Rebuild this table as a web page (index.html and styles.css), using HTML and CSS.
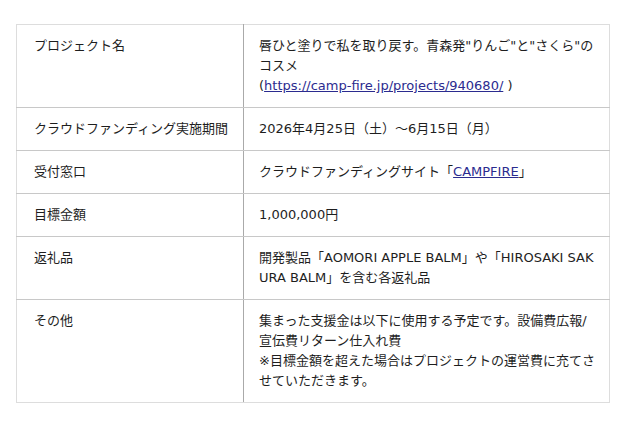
FILE: index.html
```html
<!DOCTYPE html>
<html lang="ja">
<head>
<meta charset="utf-8">
<link rel="stylesheet" href="styles.css">
</head>
<body>
<div class="wrap">
<table class="info">
  <tr>
    <td class="label">プロジェクト名</td>
    <td class="value">唇ひと塗りで私を取り戻す。青森発"りんご"と"さくら"のコスメ<br>(<a href="#">https://camp-fire.jp/projects/940680/</a> )</td>
  </tr>
  <tr>
    <td class="label">クラウドファンディング実施期間</td>
    <td class="value">2026年4月25日（土）～6月15日（月）</td>
  </tr>
  <tr>
    <td class="label">受付窓口</td>
    <td class="value">クラウドファンディングサイト「<a href="#">CAMPFIRE</a>」</td>
  </tr>
  <tr>
    <td class="label">目標金額</td>
    <td class="value">1,000,000円</td>
  </tr>
  <tr>
    <td class="label">返礼品</td>
    <td class="value">開発製品「AOMORI APPLE BALM」や「HIROSAKI SAKURA BALM」を含む各返礼品</td>
  </tr>
  <tr>
    <td class="label">その他</td>
    <td class="value">集まった支援金は以下に使用する予定です。設備費広報/宣伝費リターン仕入れ費<br>※目標金額を超えた場合はプロジェクトの運営費に充てさせていただきます。</td>
  </tr>
</table>
</div>
</body>
</html>
```

FILE: styles.css
```css
html, body {
  margin: 0;
  padding: 0;
  background: #ffffff;
}

body {
  font-family: "DejaVu Sans", "Noto Sans CJK JP", sans-serif;
  font-size: 13px;
  color: #1e1e1e;
}

.wrap {
  padding: 24px 16px;
}

.info {
  width: 594px;
  border-collapse: collapse;
  table-layout: fixed;
  border: 1px solid #dddddd;
}

.info td {
  vertical-align: top;
  line-height: 20px;
  padding: 11px 11px 11px 15px;
  border-top: 1px solid #c8c8c8;
  border-bottom: 1px solid #c8c8c8;
  word-break: break-all;
}

.info tr:first-child td {
  border-top-color: #dddddd;
}

.info tr:last-child td {
  border-bottom-color: #dddddd;
}

.info td.label {
  width: 209px;
  padding-left: 17px;
  padding-right: 0;
  border-left: 1px solid #dddddd;
  border-right: 1px solid #aaaaaa;
}

.info td.value {
  border-right: 1px solid #dddddd;
}

.info a {
  color: #2b2b8f;
  text-decoration: underline;
}
```
